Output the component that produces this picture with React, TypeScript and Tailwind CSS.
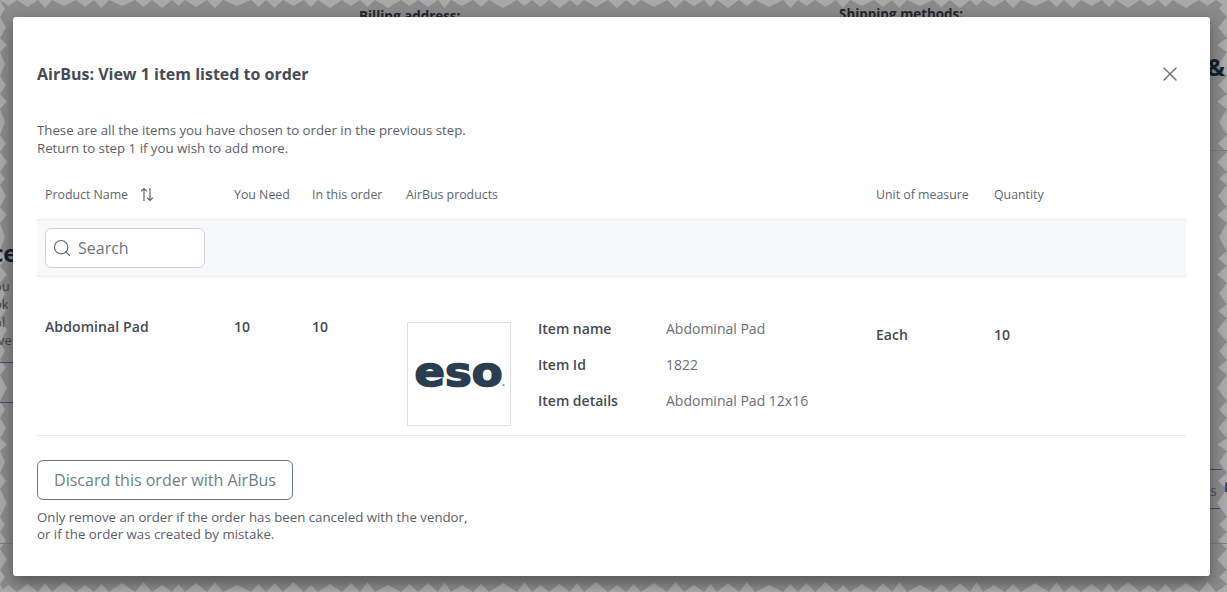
import { Search, X } from 'lucide-react';

// uneven teeth, repeated along each edge of the page behind the overlay
const teeth = [17, 21, 14, 24, 18, 15, 26, 17, 20, 13, 22, 16, 28, 15];

const zigzag = (length: number, depth: (i: number) => number, flip: boolean, across: number, vertical: boolean) => {
    const pts: string[] = [];
    let pos = 0;
    let i = 0;
    const put = (along: number, off: number) => {
        const a = flip ? across - off : off;
        pts.push(vertical ? `${a},${along}` : `${along},${a}`);
    };
    put(0, 0);
    while (pos < length) {
        const w = teeth[i % teeth.length];
        put(pos + w / 2, depth(i));
        put(pos + w, 0);
        pos += w;
        i++;
    }
    return pts.join(' ');
};

const Backdrop = () => {
    const top = zigzag(1227, (i) => 6 + (i % 3), false, 592, false);
    const bottom = zigzag(1227, (i) => 7 + (i % 4), true, 592, false);
    const left = zigzag(592, (i) => 5 + (i % 3), false, 1227, true);
    const right = zigzag(592, (i) => 8 + (i % 3), true, 1227, true);

    return (
        <div className="absolute inset-0 bg-[#8a8a8a] text-[#23262e]">
            <svg className="absolute inset-0" width="1227" height="592" viewBox="0 0 1227 592">
                <polygon points={top} fill="#a9a9a9" />
                <polygon points={bottom} fill="#a9a9a9" />
                <polygon points={left} fill="#a9a9a9" />
                <polygon points={right} fill="#a9a9a9" />
            </svg>
            <p className="absolute left-[359px] top-[6px] text-[13.4px] font-bold">Billing address:</p>
            <p className="absolute left-[839px] top-[4px] text-[13.4px] font-bold">Shipping methods:</p>
            <p className="absolute left-[1207px] top-[51px] text-[24px] font-bold leading-8 text-[#14202e]">&amp;</p>
            <p className="absolute left-[-9px] top-[237px] text-[24px] font-bold leading-8 text-[#14202e]">ce</p>
            <div className="absolute left-0 top-[277px] w-[13px] overflow-hidden text-[13px] leading-[18px] text-[#444]">
                <p className="ml-[-6px]">ou</p>
                <p className="ml-[-6px]">ok</p>
                <p className="ml-[-6px]">pl</p>
                <p className="ml-[-2px]">ve</p>
            </div>
            <div className="absolute left-0 top-[362px] h-px w-[13px] bg-[#3f4a80]" />
            <div className="absolute left-0 top-[402px] h-px w-[13px] bg-[#3f4a80]" />
            <div className="absolute left-[1210px] top-[469px] h-px w-[12px] bg-[#3f4a80]" />
            <div className="absolute left-[1210px] top-[508px] h-px w-[10px] bg-[#3f4a80]" />
            <p className="absolute left-[1210px] top-[480px] text-[14px] text-[#4b5468]">s</p>
            <div className="absolute left-[1225px] top-[482px] h-[10px] w-[2px] rounded-tl bg-[#3f4a80]" />
            <div className="absolute left-0 top-[543px] h-px w-[13px] bg-[#7b7b7b]" />
            <div className="absolute left-[1210px] top-[543px] h-px w-[17px] bg-[#7b7b7b]" />
            <div className="absolute left-[1210px] top-[150px] h-px w-[17px] bg-[#7b7b7b]" />
        </div>
    );
};

const SortIcon = () => (
    <svg width="14" height="15" viewBox="0 0 14 15" fill="none" stroke="#5f6670" strokeWidth="1.2">
        <path d="M4 14V1.5M1.2 4.2 4 1.5l2.8 2.7" />
        <path d="M10 1v12.5M7.2 10.8l2.8 2.7 2.8-2.7" />
    </svg>
);

const EsoLogo = () => (
    <svg width="90" height="34" viewBox="0 0 90 34">
        <text
            x="-0.5"
            y="28.5"
            textLength="88"
            lengthAdjust="spacingAndGlyphs"
            fontFamily="'DejaVu Sans', sans-serif"
            fontWeight="700"
            fontSize="40"
            fill="#2b3d51"
            stroke="#2b3d51"
            strokeWidth="1.6"
        >
            eso
        </text>
        <circle cx="88.5" cy="28" r="1.2" fill="#9aa3ad" />
    </svg>
);

const details = [
    ['Item name', 'Abdominal Pad'],
    ['Item Id', '1822'],
    ['Item details', 'Abdominal Pad 12x16'],
];

const gridCols = 'grid grid-cols-[189px_78px_94px_470px_118px_1fr] pl-2';

const App = () => {
    return (
        <div className="relative h-[592px] w-[1227px] overflow-hidden font-['Open_Sans',sans-serif]">
            <Backdrop />

            <div className="relative ml-[13px] mt-[17px] flex h-[559px] w-[1197px] flex-col rounded-[3px] bg-white px-6 shadow-[0_6px_16px_rgba(0,0,0,0.4)]">
                <div className="flex h-[104px] shrink-0 items-start justify-between">
                    <h2 className="mt-[46px] text-[16px] font-bold leading-[22px] text-[#474b55]">
                        AirBus: View 1 item listed to order
                    </h2>
                    <button className="mr-1 mt-[45px] text-[#6a7480]">
                        <X size={24} strokeWidth={1.4} />
                    </button>
                </div>

                <p className="text-[13.25px] leading-[18px] text-[#5b6068]">
                    These are all the items you have chosen to order in the previous step.
                    <br />
                    Return to step 1 if you wish to add more.
                </p>

                <div className={`${gridCols} mt-[18px] h-[44px] items-center pb-1 text-[12.35px] text-[#5f6670]`}>
                    <div className="flex items-center gap-3">
                        Product Name
                        <SortIcon />
                    </div>
                    <div>You Need</div>
                    <div>In this order</div>
                    <div>AirBus products</div>
                    <div>Unit of measure</div>
                    <div>Quantity</div>
                </div>

                <div className="flex h-[58px] items-center border-y border-[#e9eaec] bg-[#f7f8fa] pl-2">
                    <div className="flex h-10 w-40 items-center gap-[6px] rounded-md border border-[#cfd1d6] bg-white pl-[6px]">
                        <Search size={20} strokeWidth={1.4} className="text-[#5f6670]" />
                        <span className="text-[16px] text-[#6f757d]">Search</span>
                    </div>
                </div>

                <div className={`${gridCols} h-[159px] border-b border-[#e9eaec] pt-[40px] text-[14px] text-[#454a52]`}>
                    <div className="font-[550] leading-5 tracking-[0.1px]">Abdominal Pad</div>
                    <div className="font-[550] leading-5">10</div>
                    <div className="font-[550] leading-5">10</div>
                    <div className="flex pl-px pt-[5px]">
                        <div className="flex h-[104px] w-[104px] shrink-0 items-center justify-center border border-[#dedfe2] pl-px">
                            <EsoLogo />
                        </div>
                        <div className="ml-[27px] mt-[-3px] flex flex-col gap-4">
                            {details.map(([label, value]) => (
                                <div key={label} className="flex leading-5">
                                    <span className="w-32 font-[550]">{label}</span>
                                    <span className="font-medium text-[#6a7078]">{value}</span>
                                </div>
                            ))}
                        </div>
                    </div>
                    <div className="pt-[8px] font-[550] leading-5">Each</div>
                    <div className="pt-[8px] font-[550] leading-5">10</div>
                </div>

                <button className="mt-6 h-10 w-64 rounded-md border border-[#5f7a88] text-[16px] text-[#6b818d]">
                    Discard this order with AirBus
                </button>
                <p className="mt-[9px] text-[13.25px] leading-[17px] text-[#5b6068]">
                    Only remove an order if the order has been canceled with the vendor,
                    <br />
                    or if the order was created by mistake.
                </p>
            </div>
        </div>
    );
};

export default App;
